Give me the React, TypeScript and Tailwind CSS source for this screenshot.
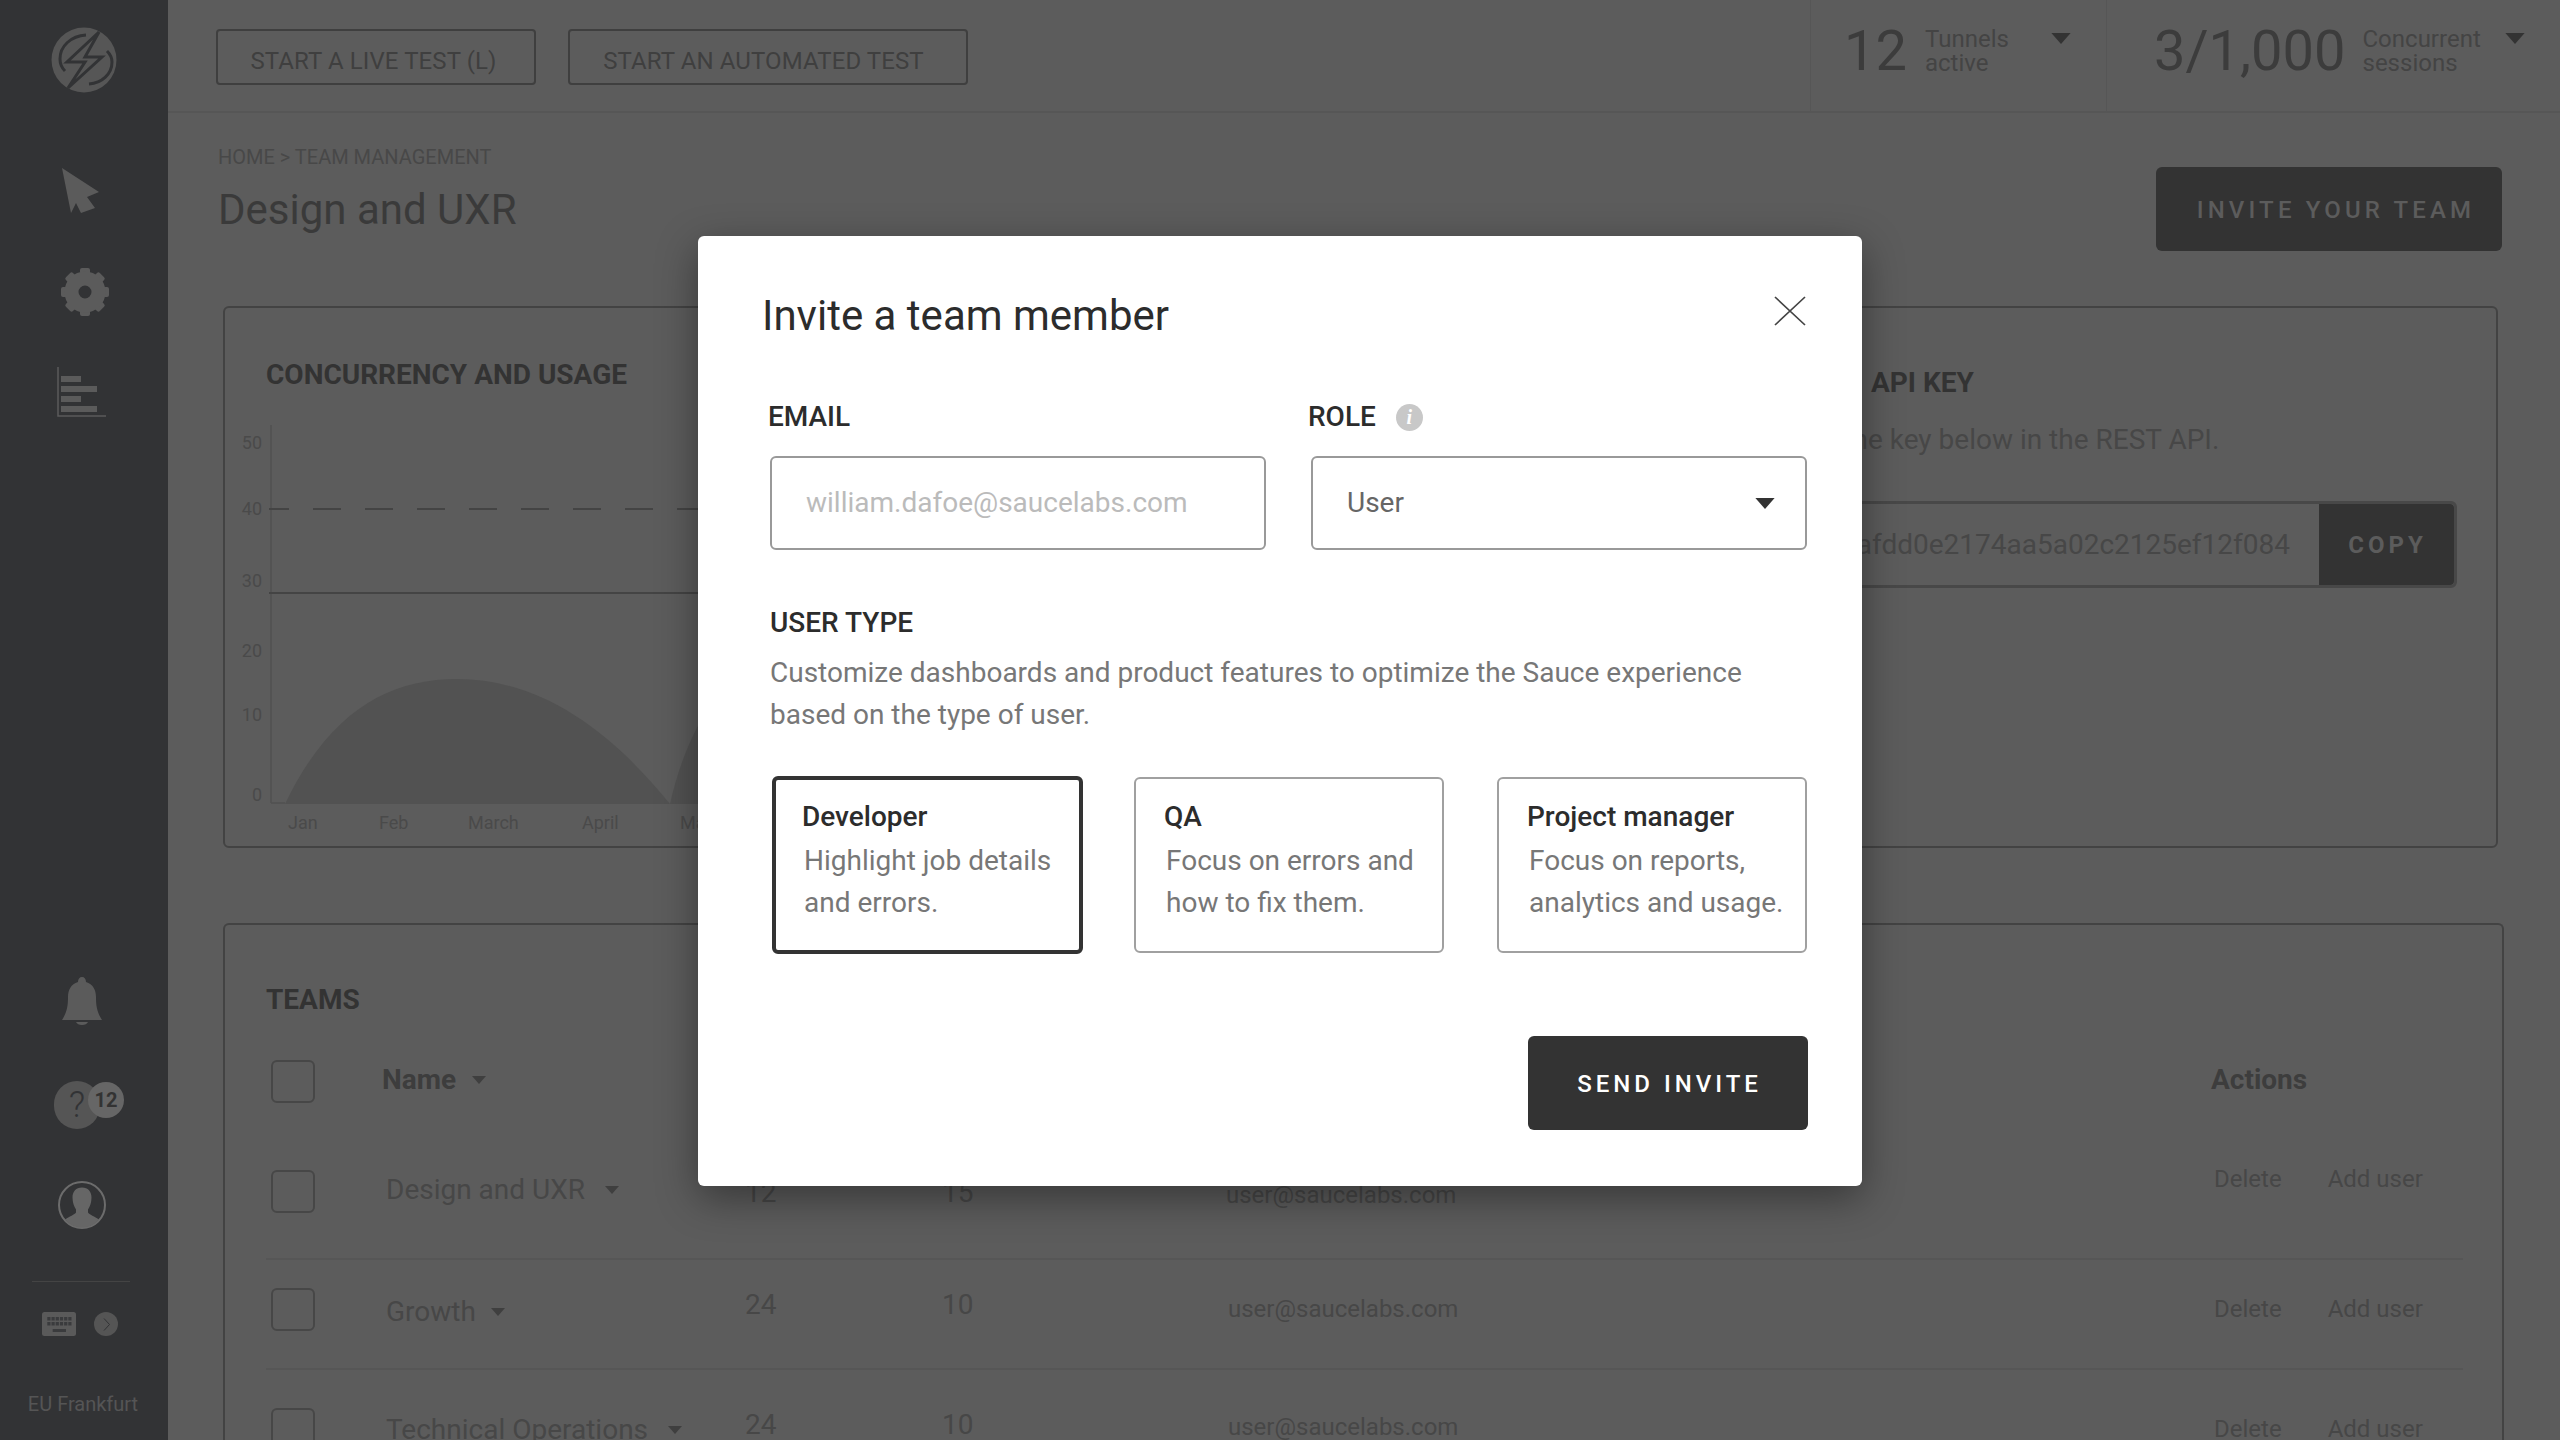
import React from "react";

const font = { fontFamily: "Roboto, sans-serif" };

function Tri({ c = "#3a3a3a", w = 14, h = 8 }: { c?: string; w?: number; h?: number }) {
  return (
    <svg width={w} height={h} viewBox="0 0 14 8" className="shrink-0">
      <path d="M0 0H14L7 8Z" fill={c} />
    </svg>
  );
}

function Logo() {
  return (
    <svg width="66" height="66" viewBox="0 0 66 66">
      <circle cx="33" cy="33" r="32.5" fill="#565656" />
      <path d="M35 8C20 9 9 19 9 32C9 37 11 41 14 44" fill="none" stroke="#323335" strokeWidth="3" />
      <path d="M56 24C59 27 61 31 61 35C61 47 51 56 38 57" fill="none" stroke="#323335" strokeWidth="3" />
      <path d="M48 5L16 35H34L17 61L51 30H34Z" fill="none" stroke="#323335" strokeWidth="3" strokeLinejoin="miter" />
    </svg>
  );
}

function Gear() {
  const teeth = [0, 45, 90, 135, 180, 225, 270, 315];
  return (
    <svg width="48" height="48" viewBox="0 0 48 48">
      {teeth.map((a) => (
        <rect key={a} x="19" y="0" width="10" height="12" rx="2" fill="#5b5b5b" transform={`rotate(${a} 24 24)`} />
      ))}
      <circle cx="24" cy="24" r="13.5" fill="none" stroke="#5b5b5b" strokeWidth="14" />
    </svg>
  );
}

function Keyboard() {
  const keys = [0, 1, 2, 3, 4, 5];
  return (
    <svg width="34" height="24" viewBox="0 0 34 24">
      <rect width="34" height="24" rx="2.500" fill="#5a5a5a" />
      {keys.map((k) => (
        <rect key={`a${k}`} x={5.3 + k * 4.2} y="5" width="3.2" height="3.5" fill="#3a3b3d" />
      ))}
      {keys.map((k) => (
        <rect key={`b${k}`} x={5.3 + k * 4.2} y="10" width="3.2" height="3.5" fill="#3a3b3d" />
      ))}
      <rect x="10.700" y="17" width="13.300" height="3" fill="#3a3b3d" />
    </svg>
  );
}

function Sidebar() {
  return (
    <aside className="flex h-[1440px] w-[168px] shrink-0 flex-col items-center bg-[#323335]">
      <div className="mt-[27px]">
        <Logo />
      </div>
      <svg width="38" height="46" viewBox="0 0 38 46" className="mt-[75px] mr-[6px]">
        <path d="M0 0L37 24L25 29L33 40L19 45L14 35L9 45Z" fill="#5b5b5b" />
      </svg>
      <div className="mt-[54px] ml-[2px]">
        <Gear />
      </div>
      <svg width="50" height="50" viewBox="0 0 50 50" className="mt-[51px] mr-[4px]">
        <path d="M1 0V49H49" fill="none" stroke="#5b5b5b" strokeWidth="1.500" />
        <rect x="4" y="9" width="20" height="6" fill="#5b5b5b" />
        <rect x="4" y="19" width="36" height="6" fill="#5b5b5b" />
        <rect x="4" y="29" width="20" height="6" fill="#5b5b5b" />
        <rect x="4" y="39" width="36" height="6" fill="#5b5b5b" />
      </svg>
      <svg width="40" height="48" viewBox="0 0 40 48" className="mt-[560px] mr-[4px]">
        <path d="M20 0c2.500 0 4 2 4 5 7 2 10 8 10 15 0 9 1 15 6 23H0c5-8 6-14 6-23 0-7 3-13 10-15 0-3 1.500-5 4-5Z" fill="#5b5b5b" />
        <path d="M14 45h12c-1 2-3 3-6 3s-5-1-6-3Z" fill="#5b5b5b" />
      </svg>
      <div className="relative mt-[56px] mr-[14px] flex h-[48px] w-[46px] items-center justify-center rounded-full bg-[#555555] text-[36px] leading-none font-light text-[#323335]">
        ?
        <span className="absolute top-[1px] left-[34px] flex h-[36px] w-[36px] items-center justify-center rounded-full bg-[#666666] text-[20px] font-bold text-[#333333]">
          12
        </span>
      </div>
      <svg width="48" height="48" viewBox="0 0 48 48" className="mt-[52px] mr-[4px]">
        <circle cx="24" cy="24" r="23" fill="#323335" stroke="#6c6c6c" strokeWidth="2" />
        <path d="M24 6.500c6 0 9.500 4 9.500 10 0 5-1.500 9-3.500 12v3c1 2 7 4 11 7A22 22 0 0 1 7 38.500c4-3 10-5 11-7v-3c-2-3-3.500-7-3.500-12 0-6 3.500-10 9.500-10Z" fill="#666666" />
      </svg>
      <div className="mt-[52px] mr-[6px] h-px w-[98px] bg-[#444444]" />
      <div className="mt-[30px] mr-[8px] flex items-center gap-[18px]">
        <Keyboard />
        <div className="flex h-[24px] w-[24px] items-center justify-center rounded-full bg-[#555555]">
          <svg width="7" height="13" viewBox="0 0 7 13">
            <path d="M1 .5L6.500 6.500L1 12.500" fill="none" stroke="#323335" strokeWidth="1" />
          </svg>
        </div>
      </div>
      <div className="mt-[57px] mr-[2px] text-[20px] leading-[22px] text-[#555555]">EU Frankfurt</div>
    </aside>
  );
}

function TopStat({ value, a, b, pad, gap }: { value: string; a: string; b: string; pad: string; gap: string }) {
  return (
    <div className={`flex h-full w-full items-start ${pad}`}>
      <div className="mt-[21px] text-[56px] leading-[60px] font-normal text-[#3c3c3c]">{value}</div>
      <div className={`mt-[27px] text-[24px] leading-[24px] text-[#444444] ${gap}`}>
        <div>{a}</div>
        <div>{b}</div>
      </div>
    </div>
  );
}

function TopBar() {
  return (
    <header className="flex h-[113px] items-start border-b-2 border-[#565656]">
      <button className="mt-[29px] ml-[48px] h-[56px] w-[320px] rounded-[4px] border-2 border-[#3f3f3f] pt-[7px] pr-[5px] text-[24px] tracking-[0.1px] text-[#3f3f3f]">
        START A LIVE TEST (L)
      </button>
      <button className="mt-[29px] ml-[32px] h-[56px] w-[400px] rounded-[4px] border-2 border-[#3f3f3f] pt-[7px] pr-[9px] text-[24px] tracking-[0.1px] text-[#3f3f3f]">
        START AN AUTOMATED TEST
      </button>
      <div className="ml-auto flex h-full">
        <div className="relative flex h-full w-[296px] border-l border-[#565656]">
          <TopStat value="12" a="Tunnels" b="active" pad="pl-[33px]" gap="ml-[18px]" />
          <div className="absolute top-[33px] left-[240px]">
            <Tri c="#333333" w={20} h={11} />
          </div>
        </div>
        <div className="relative flex h-full w-[454px] border-l border-[#565656]">
          <TopStat value="3/1,000" a="Concurrent" b="sessions" pad="pl-[47px]" gap="ml-[17px]" />
          <div className="absolute top-[33px] left-[398px]">
            <Tri c="#333333" w={20} h={11} />
          </div>
        </div>
      </div>
    </header>
  );
}

function Chart() {
  const labels: [string, number][] = [
    ["50", 443],
    ["40", 509],
    ["30", 581],
    ["20", 651],
    ["10", 715],
    ["0", 795],
  ];
  const months: [string, number][] = [
    ["Jan", 288],
    ["Feb", 379],
    ["March", 468],
    ["April", 582],
    ["May", 680],
  ];
  return (
    <svg width="1120" height="420" viewBox="224 425 1120 420" className="mt-[34px] -ml-[42px] block">
      <path d="M271 425V803" stroke="#505050" strokeWidth="1.500" />
      <path d="M269 509H1340" stroke="#444444" strokeWidth="2" strokeDasharray="28 24" strokeDashoffset="8" />
      <path d="M269 593H1340" stroke="#444444" strokeWidth="2" />
      <path d="M285 804C330 710 390 679 457 679C540 679 610 730 670 804Z" fill="#525252" />
      <path d="M670 804C680 760 695 725 720 690L760 804Z" fill="#525252" />
      <path d="M271 803H285" stroke="#505050" strokeWidth="1.500" />
      {labels.map(([t, y]) => (
        <text key={t} x="262" y={y + 6} textAnchor="end" fontFamily="Roboto" fontSize="18" fill="#4a4a4a">
          {t}
        </text>
      ))}
      {months.map(([t, x]) => (
        <text key={t} x={x} y="829" fontFamily="Roboto" fontSize="18" fill="#4a4a4a">
          {t}
        </text>
      ))}
    </svg>
  );
}

type RowProps = {
  name: string;
  a: string;
  b: string;
  h: string;
  checkTop: string;
  nameTop: string;
  numTop: string;
  mailTop: string;
  actTop: string;
  mailLeft?: string;
  nameGap?: string;
  border?: boolean;
};

function Row({ name, a, b, h, checkTop, nameTop, numTop, mailTop, actTop, mailLeft = "", nameGap = "gap-[20px]", border }: RowProps) {
  return (
    <div className={`flex items-start ${h} ${border ? "border-b-2 border-[#565656]" : ""}`}>
      <div className={`ml-[5px] h-[43px] w-[44px] shrink-0 rounded-[6px] border-2 border-[#474747] ${checkTop}`} />
      <div className={`ml-[71px] flex w-[359px] shrink-0 items-center text-[28px] leading-[34px] text-[#474747] ${nameGap} ${nameTop}`}>
        <span className="whitespace-nowrap">{name}</span>
        <Tri c="#3f3f3f" />
      </div>
      <div className={`w-[197px] shrink-0 text-[28px] leading-[34px] text-[#474747] ${numTop}`}>{a}</div>
      <div className={`w-[284px] shrink-0 text-[28px] leading-[34px] text-[#474747] ${numTop}`}>{b}</div>
      <div className={`w-[988px] shrink-0 text-[24px] leading-[30px] text-[#474747] ${mailTop}`}>
        <span className={mailLeft}>user@saucelabs.com</span>
      </div>
      <div className={`flex gap-[46px] text-[24px] leading-[30px] text-[#474747] ${actTop}`}>
        <span>Delete</span>
        <span>Add user</span>
      </div>
    </div>
  );
}

function Page() {
  return (
    <main className="min-w-0 flex-1">
      <TopBar />
      <div className="flex items-start pr-[58px] pl-[50px]">
        <div className="pt-[31px]">
          <div className="text-[20px] leading-[26px] text-[#484848]">HOME &gt; TEAM MANAGEMENT</div>
          <h1 className="mt-[14px] text-[42px] leading-[52px] font-normal text-[#3a3a3a]">Design and UXR</h1>
        </div>
        <button className="mt-[54px] ml-auto h-[84px] w-[346px] rounded-[6px] bg-[#333333] pt-[1px] pl-[14px] text-[24px] font-medium tracking-[4.15px] text-[#5c5c5c]">
          INVITE YOUR TEAM
        </button>
      </div>
      <div className="mt-[55px] ml-[55px] flex h-[542px] w-[2275px]">
        <section className="w-[1357px] rounded-[6px] border-2 border-[#434343] pt-[51px] pl-[41px]">
          <h2 className="text-[28px] leading-[32px] font-bold text-[#333333]">CONCURRENCY AND USAGE</h2>
          <Chart />
        </section>
        <section className="ml-[40px] w-[878px] rounded-[6px] border-2 border-[#434343] pt-[59px] pl-[249px]">
          <h2 className="text-[28px] leading-[32px] font-bold text-[#333333]">API KEY</h2>
          <p className="mt-[23px] -ml-[82px] text-[28px] leading-[36px] text-[#474747]">Use the key below in the REST API.</p>
          <div className="mt-[43px] -ml-[231px] flex h-[87px] w-[817px] rounded-[6px] border-[3px] border-[#484848]">
            <div className="flex flex-1 items-center justify-end pr-[29px] pt-[1px] text-[28px] text-[#474747]">5fc0afdd0e2174aa5a02c2125ef12f084</div>
            <div className="flex w-[135px] items-center justify-center rounded-r-[4px] bg-[#333333] pl-[2px] text-[24px] font-bold tracking-[4px] text-[#5c5c5c]">
              COPY
            </div>
          </div>
        </section>
      </div>
      <section className="mt-[75px] ml-[55px] h-[600px] w-[2281px] rounded-t-[6px] border-x-2 border-t-2 border-[#434343] pt-[59px] pl-[41px]">
        <h2 className="text-[28px] leading-[32px] font-bold text-[#333333]">TEAMS</h2>
        <div className="mt-[44px] flex h-[110px] items-start">
          <div className="ml-[5px] h-[43px] w-[44px] shrink-0 rounded-[6px] border-2 border-[#474747]" />
          <div className="mt-[3px] ml-[67px] flex w-[1829px] shrink-0 items-center gap-[16px] text-[28px] leading-[34px] font-bold text-[#3d3d3d]">
            <span>Name</span>
            <Tri c="#3f3f3f" />
          </div>
          <div className="mt-[3px] text-[28px] leading-[34px] font-bold text-[#3d3d3d]">Actions</div>
        </div>
        <div className="w-[2197px]">
          <Row name="Design and UXR" a="12" b="15" h="h-[90px]" checkTop="" nameTop="mt-[3px]" numTop="mt-[6px]" mailTop="mt-[10px]" actTop="-mt-[6px]" border />
          <Row name="Growth" a="24" b="10" h="h-[110px]" nameGap="gap-[15px]" checkTop="mt-[28px]" nameTop="mt-[35px]" numTop="mt-[28px]" mailTop="mt-[34px]" actTop="mt-[34px]" mailLeft="ml-[2px]" border />
          <Row name="Technical Operations" a="24" b="10" h="h-[110px]" checkTop="mt-[38px]" nameTop="mt-[43px]" numTop="mt-[38px]" mailTop="mt-[42px]" actTop="mt-[44px]" mailLeft="ml-[2px]" />
        </div>
      </section>
    </main>
  );
}

function Card({ title, l1, l2, active, ml }: { title: string; l1: string; l2: string; active?: boolean; ml: string }) {
  return (
    <div
      className={`rounded-[6px] bg-white ${ml} ${
        active ? "-my-[1px] h-[178px] w-[311px] border-[4px] border-[#333333] pt-[21px] pl-[28px]" : "h-[176px] w-[310px] border-2 border-[#a0a0a0] pt-[22px] pl-[30px]"
      }`}
    >
      <div className="-ml-[2px] text-[28px] leading-[32px] font-medium text-[#2c2c2c]">{title}</div>
      <div className="mt-[7px] text-[28px] leading-[42px] text-[#777777]">
        <div>{l1}</div>
        <div>{l2}</div>
      </div>
    </div>
  );
}

function Modal() {
  return (
    <div className="absolute inset-0 flex justify-center pt-[236px]">
      <div className="relative h-[950px] w-[1164px] rounded-[6px] bg-white pt-[53px] pl-[65px] shadow-[0_12px_40px_rgba(0,0,0,0.4)]">
        <svg width="32" height="30" viewBox="0 0 32 30" className="absolute top-[60px] right-[56px]">
          <path d="M1 1L31 29M31 1L1 29" stroke="#444444" strokeWidth="1.700" fill="none" />
        </svg>
        <h2 className="-ml-[1px] text-[42px] leading-[54px] font-normal text-[#2c2c2c]">Invite a team member</h2>
        <div className="mt-[54px] flex pl-[5px]">
          <div className="w-[540px] text-[28px] leading-[40px] font-medium text-[#2c2c2c]">EMAIL</div>
          <div className="flex items-center text-[28px] leading-[40px] font-medium text-[#2c2c2c]">
            ROLE
            <span className="ml-[20px] flex h-[27px] w-[27px] items-center justify-center rounded-full bg-[#c8c8c8] text-[20px] font-bold text-white italic" style={{ fontFamily: "Liberation Serif, serif" }}>
              i
            </span>
          </div>
        </div>
        <div className="mt-[19px] flex pl-[7px]">
          <div className="flex h-[94px] w-[496px] items-center rounded-[6px] border-2 border-[#999999] pl-[34px] text-[28px] text-[#bbbbbb]">
            william.dafoe@saucelabs.com
          </div>
          <div className="ml-[45px] flex h-[94px] w-[496px] items-center justify-between rounded-[6px] border-2 border-[#999999] pr-[30px] pl-[34px] text-[28px] text-[#666666]">
            User
            <Tri c="#333333" w={20} h={11} />
          </div>
        </div>
        <div className="mt-[55px] pl-[7px] text-[28px] leading-[36px] font-medium text-[#2c2c2c]">USER TYPE</div>
        <div className="mt-[11px] pl-[7px] text-[28px] leading-[42px] text-[#777777]">
          <div>Customize dashboards and product features to optimize the Sauce experience</div>
          <div>based on the type of user.</div>
        </div>
        <div className="mt-[41px] flex pl-[9px]">
          <Card active title="Developer" l1="Highlight job details" l2="and errors." ml="" />
          <Card title="QA" l1="Focus on errors and" l2="how to fix them." ml="ml-[51px]" />
          <Card title="Project manager" l1="Focus on reports," l2="analytics and usage." ml="ml-[53px]" />
        </div>
        <div className="mt-[83px] flex justify-end pr-[54px]">
          <button className="h-[94px] w-[280px] rounded-[6px] bg-[#333333] pt-[1px] pl-[3px] text-[24px] font-medium tracking-[4px] text-white">SEND INVITE</button>
        </div>
      </div>
    </div>
  );
}

export default function App() {
  return (
    <div className="relative flex h-[1440px] w-[2560px] overflow-hidden bg-[#5c5c5c]" style={font}>
      <Sidebar />
      <Page />
      <Modal />
    </div>
  );
}
